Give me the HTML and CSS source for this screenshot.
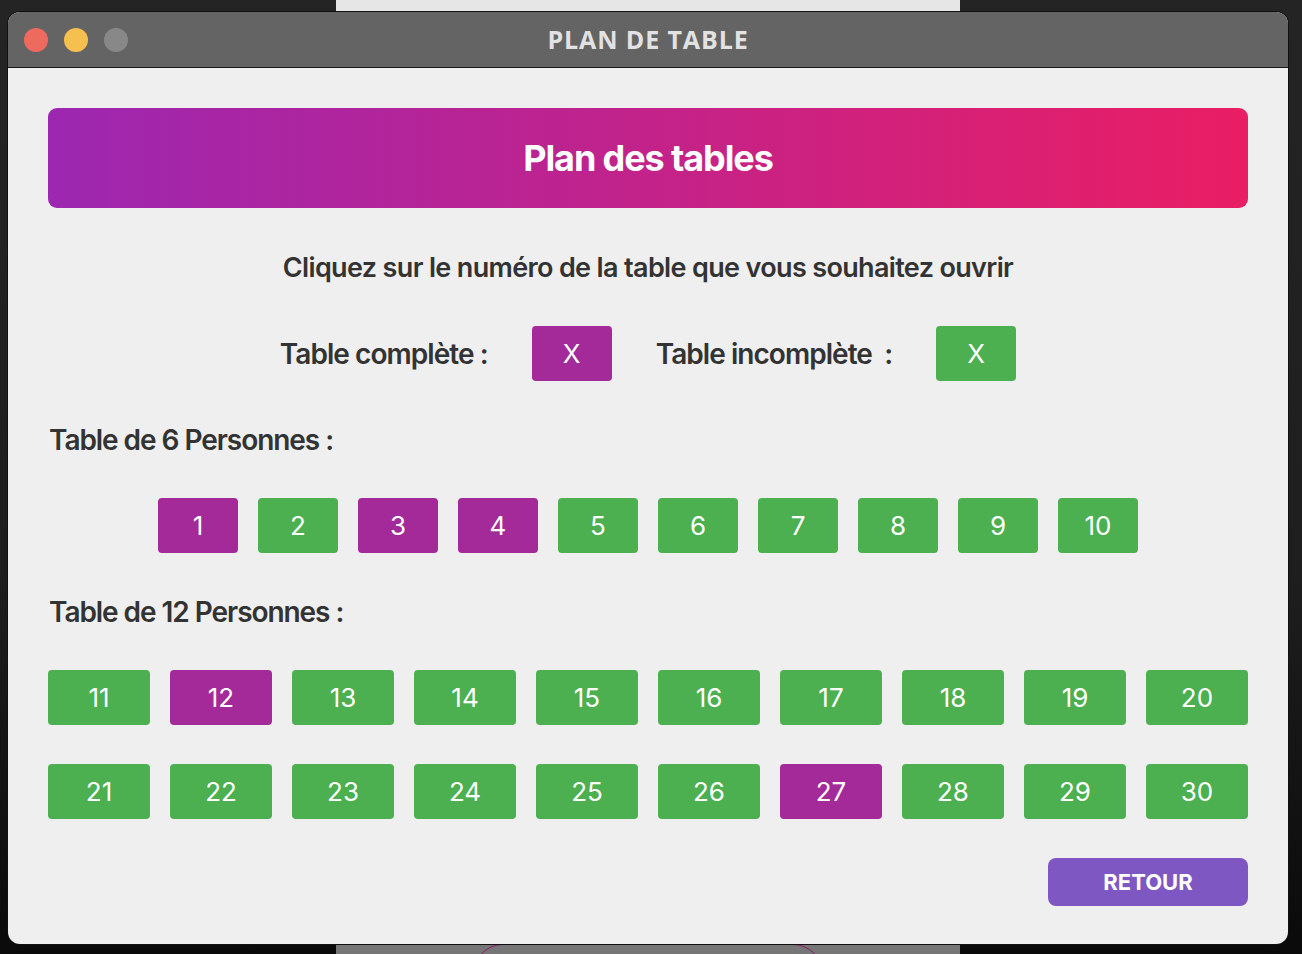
FILE: index.html
```html
<!DOCTYPE html>
<html lang="fr">
<head>
<meta charset="utf-8">
<title>Plan de table</title>
<link rel="stylesheet" href="styles.css">
</head>
<body>
<div class="desktop">
  <div class="bg-window bg-top"></div>
  <div class="bg-window bg-bottom"><div class="bg-circle"></div></div>
  <div class="window">
    <div class="titlebar">
      <div class="lights">
        <span class="light red"></span>
        <span class="light yellow"></span>
        <span class="light grey"></span>
      </div>
      <div class="wintitle">PLAN DE TABLE</div>
    </div>
    <div class="content">
      <div class="banner">Plan des tables</div>
      <p class="subtitle">Cliquez sur le numéro de la table que vous souhaitez ouvrir</p>
      <div class="legend">
        <span class="legend-label">Table complète :</span>
        <span class="tbtn full legend-box">X</span>
        <span class="legend-label">Table incomplète&nbsp; :</span>
        <span class="tbtn open legend-box">X</span>
      </div>
      <h2 class="section">Table de 6 Personnes :</h2>
      <div class="row six">
        <button class="tbtn full">1</button>
        <button class="tbtn open">2</button>
        <button class="tbtn full">3</button>
        <button class="tbtn full">4</button>
        <button class="tbtn open">5</button>
        <button class="tbtn open">6</button>
        <button class="tbtn open">7</button>
        <button class="tbtn open">8</button>
        <button class="tbtn open">9</button>
        <button class="tbtn open">10</button>
      </div>
      <h2 class="section">Table de 12 Personnes :</h2>
      <div class="grid twelve">
        <button class="tbtn open">11</button>
        <button class="tbtn full">12</button>
        <button class="tbtn open">13</button>
        <button class="tbtn open">14</button>
        <button class="tbtn open">15</button>
        <button class="tbtn open">16</button>
        <button class="tbtn open">17</button>
        <button class="tbtn open">18</button>
        <button class="tbtn open">19</button>
        <button class="tbtn open">20</button>
        <button class="tbtn open">21</button>
        <button class="tbtn open">22</button>
        <button class="tbtn open">23</button>
        <button class="tbtn open">24</button>
        <button class="tbtn open">25</button>
        <button class="tbtn open">26</button>
        <button class="tbtn full">27</button>
        <button class="tbtn open">28</button>
        <button class="tbtn open">29</button>
        <button class="tbtn open">30</button>
      </div>
      <div class="footer">
        <button class="back">RETOUR</button>
      </div>
    </div>
  </div>
</div>
</body>
</html>
```
FILE: styles.css
```css
* { box-sizing: border-box; }
html, body { margin: 0; padding: 0; }
body {
  width: 1302px;
  height: 954px;
  overflow: hidden;
  background: linear-gradient(#242424 0%, #1e1e1e 60%, #0a0a0a 100%);
  font-family: Inter, "Noto Sans", sans-serif;
}
.desktop {
  position: relative;
  width: 1302px;
  height: 954px;
  padding: 12px 0 0 8px;
}
.bg-window {
  position: absolute;
  left: 336px;
  width: 624px;
}
.bg-top {
  top: 0;
  height: 12px;
  background: #e6e6e6;
}
.bg-bottom {
  top: 944px;
  height: 10px;
  background: #767676;
  overflow: hidden;
}
.bg-circle {
  position: absolute;
  left: 137px;
  top: 0;
  width: 350px;
  height: 60px;
  border: 1px solid #8a1d6a;
  border-radius: 30px;
}
.window {
  position: relative;
  width: 1280px;
  height: 932px;
  border-radius: 12px;
  background: #efefef;
  overflow: hidden;
  box-shadow: 0 0 0 1px #111;
}
.titlebar {
  position: relative;
  height: 56px;
  background: #646464;
  border-bottom: 1px solid #1a1a1a;
  display: flex;
  align-items: center;
  justify-content: center;
}
.lights {
  position: absolute;
  left: 16px;
  top: 16px;
  display: flex;
  gap: 16px;
}
.light {
  width: 24px;
  height: 24px;
  border-radius: 50%;
  display: block;
}
.red { background: #ee6a5f; }
.yellow { background: #f5c04f; }
.grey { background: #888888; }
.wintitle {
  font-family: "Open Sans", "Liberation Sans", sans-serif;
  font-weight: 700;
  font-size: 25px;
  color: #e2e2e2;
  letter-spacing: 0.9px;
  margin-top: -2px;
}
.content {
  padding: 40px 40px 0 40px;
  display: flex;
  flex-direction: column;
}
.banner {
  height: 100px;
  border-radius: 9px;
  background: linear-gradient(90deg, #9c27b0 0%, #e91e63 100%);
  color: #fff;
  font-weight: 700;
  font-size: 36px;
  letter-spacing: -1.1px;
  display: flex;
  align-items: center;
  justify-content: center;
  padding-bottom: 1px;
}
.subtitle {
  margin: 44px 0 0 0;
  line-height: 32px;
  font-size: 27px;
  font-weight: 600;
  color: #333;
  text-align: center;
  letter-spacing: -0.65px;
}
.legend {
  margin-top: 42px;
  display: flex;
  justify-content: center;
  align-items: center;
  gap: 44px;
}
.legend-label {
  font-size: 28px;
  font-weight: 600;
  color: #333;
  letter-spacing: -0.95px;
}
.tbtn {
  border: 0;
  border-radius: 4px;
  height: 55px;
  color: #fff;
  font-family: Inter, "Noto Sans", sans-serif;
  font-size: 26px;
  font-weight: 400;
  display: flex;
  align-items: center;
  justify-content: center;
  padding: 0;
}
.full { background: #a32a98; }
.open { background: #4caf50; }
.legend-box { width: 80px; }
.section {
  margin: 43px 0 0 1px;
  line-height: 32px;
  font-size: 28px;
  font-weight: 600;
  color: #333;
  letter-spacing: -1.05px;
}
.row {
  margin-top: 42px;
  display: flex;
  justify-content: center;
  gap: 20px;
}
.row .tbtn { width: 80px; }
.grid {
  margin-top: 42px;
  display: grid;
  grid-template-columns: repeat(10, 1fr);
  column-gap: 20px;
  row-gap: 39px;
}
.footer {
  margin-top: 39px;
  display: flex;
  justify-content: flex-end;
}
.back {
  width: 200px;
  height: 48px;
  border: 0;
  border-radius: 8px;
  background: #7e57c2;
  color: #fff;
  font-family: Inter, "Noto Sans", sans-serif;
  font-weight: 700;
  font-size: 22px;
  letter-spacing: 0;
  padding: 0;
}
```
